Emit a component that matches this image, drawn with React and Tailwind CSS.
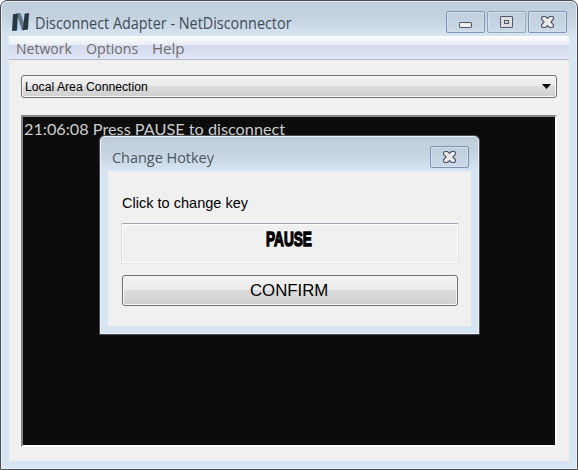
import { useLayoutEffect, useRef, useState } from 'react';

// Condenses or widens a label so that it takes exactly `width` pixels.
function Label({ width, className = '', children }) {
  const ref = useRef(null);
  const [scale, setScale] = useState(1);
  useLayoutEffect(() => {
    setScale(width / ref.current.offsetWidth);
  }, [width]);
  return (
    <span className="flex shrink-0 items-start" style={{ width }}>
      <span
        ref={ref}
        className={`block shrink-0 origin-left whitespace-nowrap ${className}`}
        style={{ transform: `scaleX(${scale})` }}
      >
        {children}
      </span>
    </span>
  );
}

const UI = "font-['Open_Sans','Noto_Sans',sans-serif]";
const ARIAL = "font-['Liberation_Sans',Arial,sans-serif]";

function CaptionButton({ muted, children }) {
  return (
    <div
      className={`flex h-[22px] w-[39px] items-center justify-center rounded-[2px] border bg-gradient-to-b from-[#c1cedc] to-[#cbd9e8] shadow-[inset_0_0_0_1px_#d2dfed] ${
        muted ? 'border-[#97a5b8]' : 'border-[#8492b2]'
      }`}
    >
      {children}
    </div>
  );
}

function CloseIcon() {
  return (
    <svg width="13" height="12" viewBox="0 0 13 12">
      <path
        d="M1.5 .5H4.5L6.5 2.4L8.5 .5H11.5L12.5 1.5V3.2L9.9 6L12.5 8.8V10.5L11.5 11.5H8.5L6.5 9.6L4.5 11.5H1.5L.5 10.5V8.8L3.1 6L.5 3.2V1.5Z"
        fill="#ececec"
        stroke="#53586d"
        strokeWidth="1.2"
      />
    </svg>
  );
}

function Logo() {
  return (
    <svg width="18" height="18" viewBox="0 0 18 18" className="shrink-0">
      <path d="M1 0H17V16L11 17L1 18Z" fill="#b4d5f1" />
      <path d="M4.5 .5L8.5 0L14 16L10 17.5Z" fill="#647583" />
      <path d="M1 1.2L6 .5L5 17.4L0 18Z" fill="#2b3740" />
      <path d="M12.6 .8L17 0L15.9 16.5L10.8 17.3Z" fill="#2b3740" />
    </svg>
  );
}

function HotkeyDialog() {
  return (
    <div className="absolute left-[98px] top-[134px] h-[200px] w-[381px] rounded-t-[6px] border border-[#4c4b50] bg-[#d7e4f1] bg-[linear-gradient(#bfccda,#c6d3e1_18px,#d7e4f1_35px)] px-2 shadow-[inset_0_0_0_1px_#ebf1f7]">
      <div className="flex h-[35px] items-start justify-between pl-1 pr-[2px]">
        <Label width={102} className={`${UI} mt-[11px] text-[15px] leading-[21px] text-[#4b5661]`}>
          Change Hotkey
        </Label>
        <div className="mt-[10px]">
          <CaptionButton>
            <CloseIcon />
          </CaptionButton>
        </div>
      </div>
      <div className="h-[155px] w-[363px] bg-[#f0f0f0] px-[13px] pt-[22px]">
        <Label width={126} className={`${ARIAL} ml-px text-[15px] leading-5 text-black`}>
          Click to change key
        </Label>
        <div className="mt-[10px] flex h-[41px] w-[338px] justify-center rounded-[2px] border border-b-[#dfe5ee] border-l-[#d9dce4] border-r-[#dfe2ea] border-t-[#a5a7ae] pr-[2px] pt-[3px] shadow-[inset_0_0_0_1px_#fcfcfd]">
          <Label width={46} className={`${ARIAL} text-[21px] leading-6 font-black text-black [-webkit-text-stroke:1.4px_#000]`}>
            PAUSE
          </Label>
        </div>
        <div className="ml-px mt-[11px] flex h-[31px] w-[336px] items-center justify-center rounded-[3px] border border-[#707070] bg-[linear-gradient(#f2f2f2,#ebebeb_14px,#dddddd_14px,#cfcfcf)] pr-[2px] shadow-[inset_0_0_0_1px_#f7f7f7]">
          <Label width={78} className={`${ARIAL} text-[17px] leading-5 text-black`}>
            CONFIRM
          </Label>
        </div>
      </div>
    </div>
  );
}

export default function App() {
  return (
    <div className="h-[470px] w-[578px] overflow-hidden bg-white">
      <div className="relative h-[470px] w-[578px] rounded-t-[7px] border border-[#4d4b50] bg-[#d7e4f2] bg-[linear-gradient(#bfccda,#c5d2e0_17px,#d7e4f2_35px)] px-2 shadow-[inset_0_0_0_1px_#e9f0f8]">
        <div className="flex h-[35px] items-start">
          <div className="ml-[3px] mt-[12px]">
            <Logo />
          </div>
          <div className="ml-[5px] mt-[12px]">
            <Label width={257} className={`${UI} text-[15.5px] leading-[21px] text-[#414c57]`}>
              Disconnect Adapter - NetDisconnector
            </Label>
          </div>
          <div className="ml-auto mr-[2px] mt-[10px] flex gap-[2px]">
            <CaptionButton>
              <span className="mt-[6px] h-[6px] w-[13px] rounded-[1px] border border-[#53586d] bg-[#f0f0f0]" />
            </CaptionButton>
            <CaptionButton muted>
              <span className="flex h-3 w-[13px] items-center justify-center rounded-[1px] border border-[#53586d] bg-[#dddddd]">
                <span className="h-[4px] w-[5px] border border-[#53586d] bg-[#c8d5e2]" />
              </span>
            </CaptionButton>
            <CaptionButton>
              <CloseIcon />
            </CaptionButton>
          </div>
        </div>
        <div className="h-[425px] w-[560px] bg-[#f0f0f0]">
          <div
            className={`${UI} flex h-6 items-center border-b border-[#b6bccc] bg-[linear-gradient(#ffffff,#e8ecf5_9px,#d3daed_9px,#e1e6f6)] pl-[7px] text-[#6d6d6d]`}
          >
            <Label width={56} className="text-[15px] leading-5">Network</Label>
            <div className="ml-[14px]">
              <Label width={52} className="text-[15px] leading-5">Options</Label>
            </div>
            <div className="ml-[14px]">
              <Label width={32} className="text-[15px] leading-5">Help</Label>
            </div>
          </div>
          <div className="px-3 pt-[15px]">
            <div className="flex h-[23px] w-[536px] items-center justify-between rounded-[3px] border border-[#707070] bg-[linear-gradient(#f2f2f2,#ebebeb_10px,#dddddd_10px,#cfcfcf)] pl-[3px] pr-[5px] shadow-[inset_0_0_0_1px_#f7f7f7]">
              <Label width={123} className={`${ARIAL} text-[12.5px] leading-5 text-black`}>
                Local Area Connection
              </Label>
              <svg width="9" height="5" viewBox="0 0 9 5">
                <path d="M0 0H9L4.5 5Z" fill="#000" />
              </svg>
            </div>
            <div className="mt-[17px] h-[332px] w-[536px] border-2 border-b-white border-l-[#858585] border-r-white border-t-[#858585] bg-[#0c0c0c] pl-px pt-px">
              <Label width={261} className="font-['Lato','Noto_Sans',sans-serif] text-[16px] leading-[21px] text-[#cccccc]">
                21:06:08 Press PAUSE to disconnect
              </Label>
            </div>
          </div>
        </div>
        <HotkeyDialog />
      </div>
    </div>
  );
}
